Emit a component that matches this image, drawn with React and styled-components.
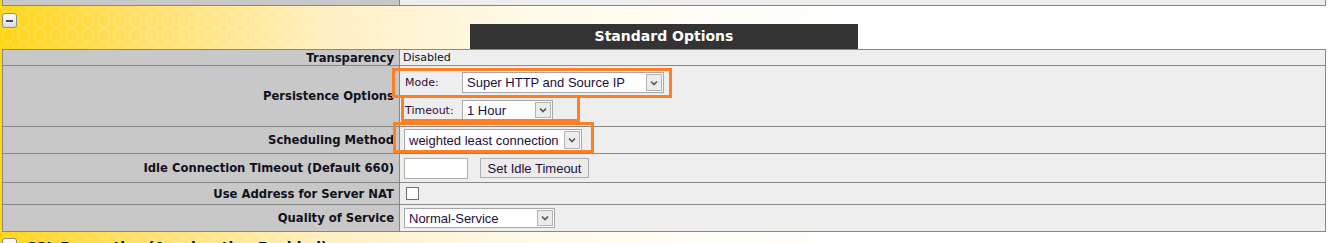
import React from 'react';
import styled, { createGlobalStyle } from 'styled-components';

const GlobalStyle = createGlobalStyle`
  html, body {
    margin: 0;
    padding: 0;
  }
  body {
    min-height: 100vh;
    font-family: "DejaVu Sans", Verdana, sans-serif;
    background-color: #fff;
    background-image:
      radial-gradient(circle, transparent 5px, rgba(255, 255, 255, 0.2) 6px, transparent 7.5px),
      linear-gradient(to right, #ffd514 0, #ffe068 140px, #fff0c2 330px, #fff9e6 520px, #fffdf6 700px, #fff 900px);
    background-size: 16px 14px, 100% 100%;
  }
`;

const Page = styled.div`
  position: relative;
  width: 1324px;
  padding: 0 12px 0 2px;
`;

// the tail of the section above, only its last 5px are in view
const PrevTable = styled.div`
  display: grid;
  grid-template-columns: 396px 1fr;
  column-gap: 1px;
  background: #888;
  padding: 0 1px 1px;
`;

const PrevCell = styled.div`
  height: 5px;
  background: ${p => (p.$label ? '#c8c8c8' : '#eeeeee')};
`;

const SectionHead = styled.div`
  padding-top: 7px;
`;

const Toggle = styled.div`
  flex: none;
  box-sizing: border-box;
  width: 15px;
  height: 15px;
  border: 1px solid #8c8c8c;
  border-radius: 3px;
  background: linear-gradient(#ffffff, #dcdcdc);
  display: flex;
  align-items: center;
  justify-content: center;

  &:after {
    content: "";
    width: 7px;
    height: 2px;
    background: #4a4a4a;
  }
`;

const Title = styled.div`
  width: 388px;
  height: 25px;
  margin: -4px auto 0;
  background: #333;
  color: #fff;
  font-weight: bold;
  font-size: 14px;
  line-height: 25px;
  text-align: center;
`;

const Table = styled.div`
  display: grid;
  grid-template-columns: 396px 1fr;
  grid-template-rows: 15px 60px 26px 28px 21px 26px;
  gap: 1px;
  background: #888;
  border: 1px solid #888;
`;

const LabelCell = styled.div`
  background: #c8c8c8;
  display: flex;
  align-items: center;
  justify-content: flex-end;
  padding-right: 5px;
  font-size: 11.6px;
  font-weight: bold;
  color: #10101c;
  white-space: nowrap;
`;

const ValueCell = styled.div`
  background: #eeeeee;
  display: flex;
  flex-direction: ${p => (p.$stack ? 'column' : 'row')};
  align-items: ${p => (p.$stack ? 'flex-start' : 'center')};
  gap: ${p => (p.$stack ? '7px' : '12px')};
  padding: ${p => (p.$stack ? '6px 0 0 4px' : '0 0 0 4px')};
  font-size: 11px;
  color: #111;
`;

const PlainValue = styled.span`
  margin-left: -1px;
`;

const FieldLine = styled.div`
  display: flex;
  align-items: center;
  margin-left: 1px;
`;

const FieldLabel = styled.span`
  width: 57px;
  font-size: 11px;
  color: #2d0c3c;
`;

const SelectBox = styled.div`
  box-sizing: border-box;
  display: inline-flex;
  align-items: stretch;
  width: ${p => p.$w}px;
  height: ${p => p.$h || 21}px;
  border: 1px solid #a8a8a8;
  background: #fff;
  font: 13px "Liberation Sans", Arial, sans-serif;
  color: #1c0f3c;
`;

const SelectText = styled.span`
  flex: 1;
  padding-left: 4px;
  display: flex;
  align-items: center;
  white-space: nowrap;
  overflow: hidden;
`;

const Arrow = styled.span`
  box-sizing: border-box;
  width: 16px;
  margin: 1px;
  border: 1px solid #b4b4b4;
  background: #ececec;
  display: flex;
  align-items: center;
  justify-content: center;
`;

const TextBox = styled.div`
  box-sizing: border-box;
  width: 64px;
  height: 21px;
  border: 1px solid #b0b0b0;
  background: #fff;
`;

const Button = styled.div`
  box-sizing: border-box;
  width: 109px;
  height: 20px;
  border: 1px solid #adadad;
  background: #ececec;
  font: 13px "Liberation Sans", Arial, sans-serif;
  color: #1c0f3c;
  display: flex;
  align-items: center;
  justify-content: center;
`;

const Check = styled.div`
  box-sizing: border-box;
  width: 13px;
  height: 13px;
  margin-left: 2px;
  border: 1px solid #707070;
  background: #fff;
`;

const Highlight = styled.div`
  position: absolute;
  box-sizing: border-box;
  left: ${p => p.$x}px;
  top: ${p => p.$y}px;
  width: ${p => p.$w}px;
  height: ${p => p.$h}px;
  border: 3px solid #ff7f27;
  pointer-events: none;
`;

const NextHead = styled.div`
  display: flex;
  align-items: flex-start;
  gap: 10px;
  padding-top: 6px;
`;

const NextTitle = styled.span`
  font-size: 14px;
  font-weight: bold;
  color: #111;
  line-height: 16px;
  margin-top: 1px;
  white-space: nowrap;
`;

const Select = ({ width, height, value }) => (
  <SelectBox $w={width} $h={height}>
    <SelectText>{value}</SelectText>
    <Arrow>
      <svg width="8" height="6" viewBox="0 0 8 6">
        <polyline points="1,1.5 4,4.5 7,1.5" fill="none" stroke="#555" strokeWidth="1.6" />
      </svg>
    </Arrow>
  </SelectBox>
);

const App = () => {
  return (
    <Page>
      <GlobalStyle />

      <PrevTable>
        <PrevCell $label />
        <PrevCell />
      </PrevTable>

      <SectionHead>
        <Toggle />
        <Title>Standard Options</Title>
      </SectionHead>

      <Table>
        <LabelCell>Transparency</LabelCell>
        <ValueCell>
          <PlainValue>Disabled</PlainValue>
        </ValueCell>

        <LabelCell>Persistence Options</LabelCell>
        <ValueCell $stack>
          <FieldLine>
            <FieldLabel>Mode:</FieldLabel>
            <Select width={202} value="Super HTTP and Source IP" />
          </FieldLine>
          <FieldLine>
            <FieldLabel>Timeout:</FieldLabel>
            <Select width={91} height={20} value="1 Hour" />
          </FieldLine>
        </ValueCell>

        <LabelCell>Scheduling Method</LabelCell>
        <ValueCell>
          <Select width={178} height={22} value="weighted least connection" />
        </ValueCell>

        <LabelCell>Idle Connection Timeout (Default 660)</LabelCell>
        <ValueCell>
          <TextBox />
          <Button>Set Idle Timeout</Button>
        </ValueCell>

        <LabelCell>Use Address for Server NAT</LabelCell>
        <ValueCell>
          <Check />
        </ValueCell>

        <LabelCell>Quality of Service</LabelCell>
        <ValueCell>
          <Select width={151} height={20} value="Normal-Service" />
        </ValueCell>
      </Table>

      <NextHead>
        <Toggle />
        <NextTitle>SSL Properties (Acceleration Enabled)</NextTitle>
      </NextHead>

      <Highlight $x={392} $y={68} $w={280} $h={30} />
      <Highlight $x={401} $y={95} $w={179} $h={27} />
      <Highlight $x={393} $y={122} $w={201} $h={31} />
    </Page>
  );
};

export default App;
